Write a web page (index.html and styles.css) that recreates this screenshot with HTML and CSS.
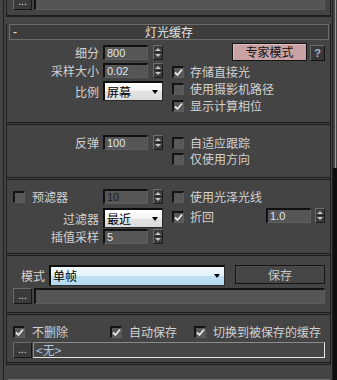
FILE: index.html
```html
<!DOCTYPE html>
<html lang="zh">
<head>
<meta charset="utf-8">
<title>灯光缓存</title>
<link rel="stylesheet" href="styles.css">
</head>
<body>
<div class="panel">
  <div class="prev">
    <div class="prev-row">
      <div class="dots-btn">...</div>
      <div class="bar-field"></div>
    </div>
  </div>

  <div class="rollout">
    <div class="rhead"><span class="sign">-</span><span class="title">灯光缓存</span><span></span></div>

    <div class="group g1">
      <div class="lcol">
        <div class="row h15"><span class="lbl">细分</span><span class="num">800</span><span class="spin"></span></div>
        <div class="row h15 mt3"><span class="lbl">采样大小</span><span class="num">0.02</span><span class="spin"></span></div>
        <div class="row h20 mt3"><span class="lbl">比例</span><span class="combo">屏幕</span></div>
      </div>
      <div class="rcol">
        <div class="btnrow">
          <span class="expert">专家模式</span><span class="help">?</span>
        </div>
        <div class="chk mt5"><span class="box on"></span><span>存储直接光</span></div>
        <div class="chk mt5"><span class="box"></span><span>使用摄影机路径</span></div>
        <div class="chk mt5"><span class="box on"></span><span>显示计算相位</span></div>
      </div>
    </div>

    <div class="group g2">
      <div class="lcol">
        <div class="row h15"><span class="lbl">反弹</span><span class="num">100</span><span class="spin"></span></div>
      </div>
      <div class="rcol">
        <div class="chk"><span class="box"></span><span>自适应跟踪</span></div>
        <div class="chk mt4"><span class="box"></span><span>仅使用方向</span></div>
      </div>
    </div>

    <div class="group g3">
      <div class="lcol">
        <div class="row h15"><span class="lbl left"><span class="box"></span><span class="boxtxt">预滤器</span></span><span class="num dis">10</span><span class="spin"></span></div>
        <div class="row h20 mt4"><span class="lbl">过滤器</span><span class="combo">最近</span></div>
        <div class="row h15 mt1"><span class="lbl">插值采样</span><span class="num">5</span><span class="spin"></span></div>
      </div>
      <div class="rcol">
        <div class="chk"><span class="box"></span><span>使用光泽光线</span></div>
        <div class="row h15 mt5 end">
          <span class="chk"><span class="box on"></span><span>折回</span></span>
          <span class="num push">1.0</span><span class="spin sp4"></span>
        </div>
      </div>
    </div>

    <div class="group g4">
      <div class="row h21 start">
        <span class="mode-lbl">模式</span>
        <span class="combo blue">单帧</span>
        <span class="save">保存</span>
      </div>
      <div class="row h16 mt2">
        <div class="dots-btn">...</div>
        <div class="bar-field"></div>
      </div>
    </div>

    <div class="group g5">
      <div class="row h13">
        <span class="chk c1"><span class="box on"></span><span>不删除</span></span>
        <span class="chk c2"><span class="box on"></span><span>自动保存</span></span>
        <span class="chk c3"><span class="box on"></span><span>切换到被保存的缓存</span></span>
      </div>
      <div class="row h16 mt4">
        <div class="dots-btn">...</div>
        <div class="file-field">&lt;无&gt;</div>
      </div>
    </div>
  </div>

  <div class="next">
    <div class="rhead"><span class="sign">+</span><span class="title">焦散</span><span></span></div>
  </div>
</div>
<div class="scroll"><div class="thumb"></div><div class="track"></div></div>
</body>
</html>
```

FILE: styles.css
```css
* { box-sizing: border-box; }
html, body { margin: 0; padding: 0; }
body {
  width: 337px;
  height: 380px;
  overflow: hidden;
  background: #444444;
  font-family: "Noto Sans CJK SC", "Liberation Sans", sans-serif;
  font-size: 12px;
  color: #d2d2d2;
  display: flex;
}

.panel {
  flex: none;
  margin-left: 3px;
  width: 330px;
  height: 380px;
  border-left: 1px solid #1e1e1e;
  border-right: 1px solid #1e1e1e;
}

.scroll {
  flex: none;
  width: 4px;
  height: 380px;
  display: flex;
  flex-direction: column;
}
.thumb {
  height: 168px;
  border-right: 1px solid #444;
  background: linear-gradient(90deg, #444 0 2px, #9a9a9a 2px 3px);
}
.track { flex: 1; background: #0f0f0f; }

/* previous rollout tail */
.prev {
  margin-left: 2px;
  width: 325px;
  height: 17px;
  border: 1px solid #1e1e1e;
  border-top: none;
  border-bottom-width: 2px;
}
.prev-row {
  height: 10px;
  overflow: hidden;
  display: flex;
  align-items: flex-end;
  padding-left: 6px;
}
.prev-row .dots-btn, .prev-row .bar-field { height: 16px; }

.rollout {
  margin-left: 2px;
  margin-top: 15px;
  width: 325px;
  border: 1px solid #1e1e1e;
  border-top: none;
  border-bottom: none;
}

.rhead {
  margin: -8px 1px 0 2px;
  height: 16px;
  border: 1px solid #6c6c6c;
  background: #3d3d3d;
  display: grid;
  grid-template-columns: 1fr auto 1fr;
  align-items: center;
  color: #e4e4e4;
  line-height: 14px;
}
.sign { padding-left: 3px; font-family: "Liberation Sans", sans-serif; font-size: 12px; }
.title { font-size: 12px; }

.next {
  margin-left: 2px;
  margin-top: 14px;
  width: 325px;
}
.next .rhead { margin-top: 0; }

.group {
  display: flex;
  border-bottom: 3px double #1a1a1a;
}
.g1 { height: 85px; }
.g2 { height: 55px; }
.g3 { height: 76px; }
.g4 { height: 59px; flex-direction: column; padding-top: 9px; }
.g5 { height: 50px; flex-direction: column; padding-top: 10px; }

.lcol { width: 156px; display: flex; flex-direction: column; }
.rcol { margin-left: 9px; flex: 1; display: flex; flex-direction: column; }

.g1 .lcol { padding-top: 5px; }
.g1 .rcol { padding-top: 3px; }
.g2 .lcol { padding-top: 10px; }
.g2 .rcol { padding-top: 12px; }
.g3 .lcol { padding-top: 9px; }
.g3 .rcol { padding-top: 11px; }

.row { display: flex; align-items: center; }
.row.end { align-items: flex-end; }
.row.start { align-items: flex-start; }
.h13 { height: 13px; }
.h15 { height: 15px; }
.h16 { height: 16px; }
.h20 { height: 20px; }
.h21 { height: 21px; }
.mt1 { margin-top: 1px; }
.mt2 { margin-top: 2px; }
.mt3 { margin-top: 3px; }
.mt4 { margin-top: 4px; }
.mt5 { margin-top: 5px; }

.lbl {
  width: 96px;
  padding-right: 4px;
  text-align: right;
  line-height: 15px;
  white-space: nowrap;
}
.lbl.left {
  text-align: left;
  padding-left: 6px;
  display: flex;
  align-items: center;
}
.boxtxt { margin-left: 7px; }

/* spinner number field */
.num {
  width: 45px;
  height: 15px;
  background: #565656;
  border-style: solid;
  border-width: 2px 1px 1px 2px;
  border-color: #111 #5e5e5e #5e5e5e #111;
  font-family: "Liberation Sans", sans-serif;
  font-size: 11px;
  line-height: 12px;
  padding-left: 2px;
  color: #dde6f2;
}
.num.dis { color: #1c1c24; }
.num.push { margin-left: auto; }

.spin {
  margin-left: 5px;
  width: 10px;
  height: 15px;
  border: 1px solid;
  border-color: #6e6e6e #1c1c1c #1c1c1c #6e6e6e;
  background: linear-gradient(#3c3c3c 0 6px, #222 6px 7px, #3c3c3c 7px);
  display: flex;
  flex-direction: column;
  align-items: center;
  justify-content: space-between;
  padding: 2px 0;
}
.spin::before {
  content: "";
  border-left: 3px solid transparent;
  border-right: 3px solid transparent;
  border-bottom: 3px solid #c4c4c4;
}
.spin::after {
  content: "";
  border-left: 3px solid transparent;
  border-right: 3px solid transparent;
  border-top: 3px solid #c4c4c4;
}
.spin.sp4 { margin-left: 4px; margin-right: 5px; }

/* dropdown */
.combo {
  width: 60px;
  height: 20px;
  border-style: solid;
  border-width: 2px 1px 1px 2px;
  border-color: #0c0c0c #2a2a2a #2a2a2a #0c0c0c;
  background: linear-gradient(#ffffff, #f2f2f2 50%, #e2e2e2 50%, #dcdcdc);
  color: #000;
  line-height: 16px;
  padding-left: 2px;
  display: flex;
  align-items: center;
  justify-content: space-between;
}
.combo::after {
  content: "";
  margin-right: 4px;
  border-left: 3px solid transparent;
  border-right: 3px solid transparent;
  border-top: 4px solid #000;
}
.combo.blue {
  width: 176px;
  height: 21px;
  margin-left: 4px;
  background: linear-gradient(#f2f9fe, #e2f1fb 50%, #bfe0f3 52%, #b4daf1);
}

.mode-lbl { margin-left: 14px; line-height: 21px; }

.save {
  margin-left: 10px;
  width: 90px;
  height: 19px;
  border: 1px solid #151515;
  box-shadow: inset 1px 1px 0 #4c4c4c;
  background: #464646;
  color: #c9c9c9;
  text-align: center;
  line-height: 17px;
}

/* checkboxes */
.chk { display: flex; align-items: center; height: 12px; white-space: nowrap; line-height: 12px; }
.chk .box { margin-right: 6px; }
.box {
  flex: none;
  width: 12px;
  height: 12px;
  border: 1px solid;
  border-width: 2px 1px 1px 2px;
  border-color: #141414 #5e5e5e #5e5e5e #141414;
  background: #585858;
  display: inline-block;
}
.box.on {
  background: #585858 url("data:image/svg+xml,%3Csvg xmlns='http://www.w3.org/2000/svg' width='9' height='9'%3E%3Cpath d='M1 4.5 L3.5 7 L8 1.5' fill='none' stroke='%23e8e8e8' stroke-width='1.8'/%3E%3C/svg%3E") center/9px 9px no-repeat;
}

.g5 .row .chk { height: 13px; }
.c1 { margin-left: 6px; width: 97px; }
.c2 { width: 84px; }
.c1 .box, .c2 .box, .c3 .box { margin-right: 7px; }

/* buttons row */
.btnrow {
  display: flex;
  align-items: flex-end;
  height: 18px;
  padding-left: 60px;
}
.expert {
  width: 75px;
  height: 18px;
  background: #c9a3a4;
  border: 1px solid #141414;
  box-shadow: inset 1px 1px 0 #dcbcbc;
  color: #111;
  text-align: center;
  line-height: 15px;
}
.help {
  margin-left: 3px;
  width: 15px;
  height: 16px;
  background: #383838;
  border: 1px solid;
  border-color: #6a6a6a #141414 #141414 #6a6a6a;
  color: #aab6cc;
  font-family: "Liberation Sans", sans-serif;
  font-size: 11px;
  font-weight: bold;
  text-align: center;
  line-height: 14px;
}

/* ... button and fields */
.dots-btn {
  margin-left: 6px;
  flex: none;
  width: 19px;
  height: 16px;
  background: #3b3b3b;
  border: 1px solid;
  border-color: #6a6a6a #161616 #161616 #6a6a6a;
  color: #e6e2c4;
  font-family: "Liberation Sans", sans-serif;
  font-size: 10px;
  line-height: 14px;
  text-align: center;
}
.prev-row .dots-btn { margin-left: 0; }
.bar-field {
  margin-left: 2px;
  width: 291px;
  height: 16px;
  background: #555555;
  border-style: solid;
  border-width: 2px 1px 1px 2px;
  border-color: #121212 #5c5c5c #5c5c5c #121212;
}
.file-field {
  margin-left: 1px;
  width: 292px;
  height: 16px;
  background: #464646;
  border: 1px solid;
  border-color: #8a8a8a #e4e4e4 #e4e4e4 #8a8a8a;
  color: #a9c6e6;
  line-height: 13px;
  padding-left: 2px;
  font-size: 12px;
}
```
